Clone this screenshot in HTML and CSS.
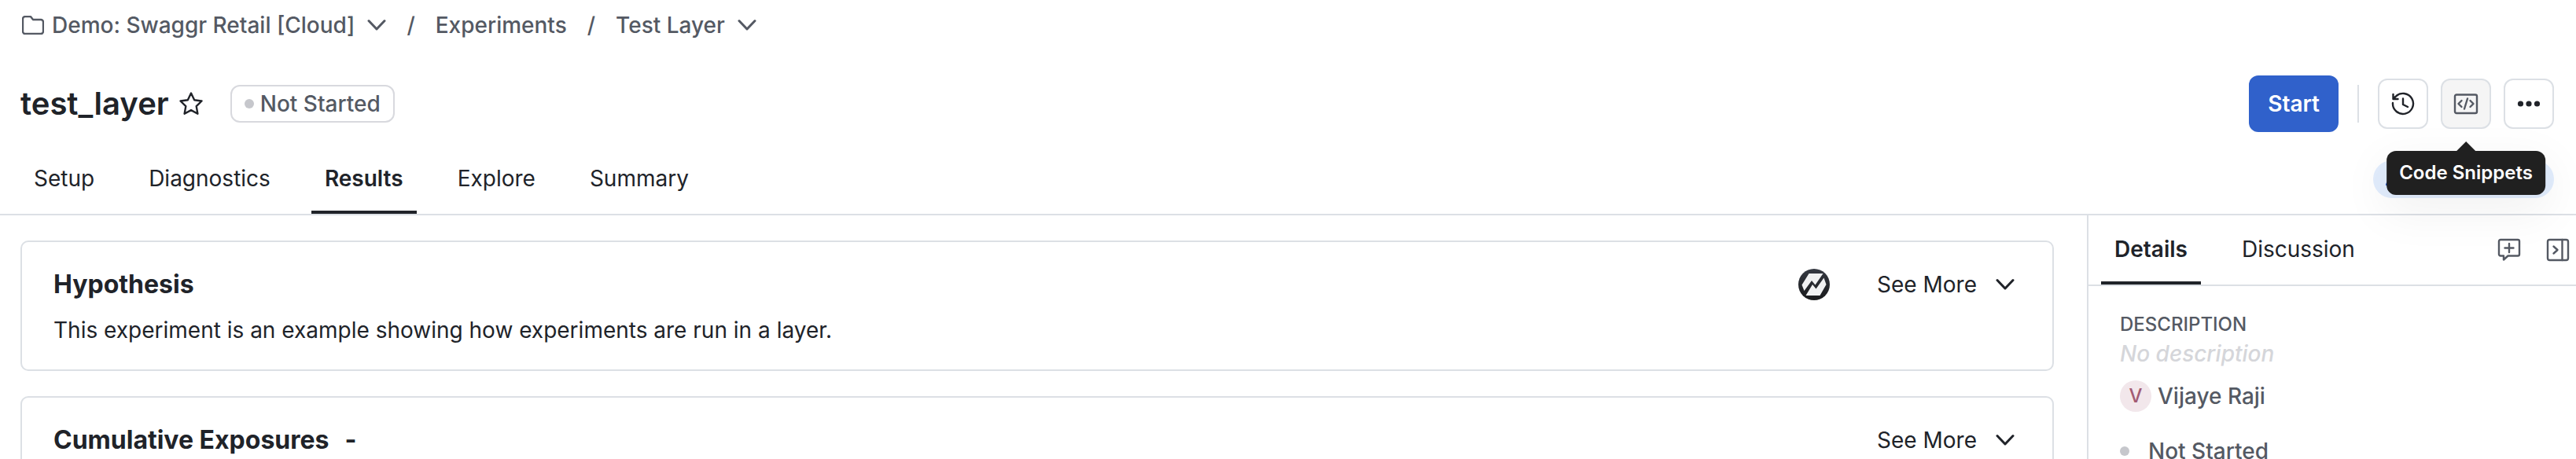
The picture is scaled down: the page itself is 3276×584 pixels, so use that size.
FILE: index.html
```html
<!DOCTYPE html>
<html lang="en">
<head>
    <meta charset="UTF-8">
    <meta name="viewport" content="width=device-width, initial-scale=1.0">
    <title>test_layer - Experiments</title>
    <link rel="stylesheet" href="styles.css">
</head>
<body>
    <header class="page-header">
        <nav class="breadcrumb" aria-label="Breadcrumb">
            <button type="button" class="crumb">
                <svg class="folder-icon" width="28" height="24" viewBox="0 0 28 24"><path d="M1 20V4a3 3 0 0 1 3-3h6a2 2 0 0 1 1.500.7L14 5h10a3 3 0 0 1 3 3v12a3 3 0 0 1-3 3H4a3 3 0 0 1-3-3z"/></svg>
                <span>Demo: Swaggr Retail [Cloud]</span>
                <svg class="chevron" width="24" height="24" viewBox="0 0 24 24"><path d="M2 6.500l10 10.500 10-10.500"/></svg>
            </button>
            <span class="slash">/</span>
            <a class="crumb" href="#experiments">Experiments</a>
            <span class="slash">/</span>
            <button type="button" class="crumb">
                <span>Test Layer</span>
                <svg class="chevron" width="24" height="24" viewBox="0 0 24 24"><path d="M2 6.500l10 10.500 10-10.500"/></svg>
            </button>
        </nav>

        <div class="title-row">
            <h1 class="page-title">test_layer</h1>
            <button type="button" class="star-btn" aria-label="Favorite">
                <svg width="32" height="32" viewBox="0 0 32 32"><path d="M16 2.500l4.200 8.700 9.300 1.300-6.800 6.600 1.700 9.600-8.400-4.600-8.400 4.600 1.700-9.600-6.800-6.600 9.300-1.300z"/></svg>
            </button>
            <span class="status-badge"><span class="dot"></span>Not Started</span>

            <div class="actions">
                <button type="button" class="start-btn">Start</button>
                <span class="divider"></span>
                <button type="button" class="icon-btn" aria-label="History">
                    <svg width="32" height="32" viewBox="0 0 32 32"><path d="M3 15a13 13 0 1 0 3.500-8L3.500 9.500M3.500 4v6h6M16 9.500V17l6 3"/></svg>
                </button>
                <div class="tooltip-wrap">
                    <button type="button" class="icon-btn active" aria-label="Code" aria-describedby="codeTip">
                        <svg width="32" height="32" viewBox="0 0 32 32"><rect x="2" y="4.500" width="28" height="23.500" rx="2"/><path d="M10.500 12L6.500 16l4 4M21.500 12l4 4-4 4M18 9.500l-4 13"/></svg>
                    </button>
                    <div class="tooltip" id="codeTip" role="tooltip">Code Snippets</div>
                </div>
                <button type="button" class="icon-btn" aria-label="More">
                    <svg class="more-icon" width="32" height="32" viewBox="0 0 32 32"><circle cx="5.500" cy="16" r="3.600"/><circle cx="16" cy="16" r="3.600"/><circle cx="26.500" cy="16" r="3.600"/></svg>
                </button>
            </div>
        </div>

        <div class="tab-row">
            <div class="tabs" role="tablist">
                <button type="button" class="tab" role="tab">Setup</button>
                <button type="button" class="tab" role="tab">Diagnostics</button>
                <button type="button" class="tab selected" role="tab" aria-selected="true">Results</button>
                <button type="button" class="tab" role="tab">Explore</button>
                <button type="button" class="tab" role="tab">Summary</button>
            </div>
            <span class="pill"><svg width="20" height="20" viewBox="0 0 20 20"><path d="M1 17L8 3l7 14z"/></svg></span>
        </div>
    </header>

    <div class="content">
        <main class="results">
            <section class="card">
                <div class="card-head">
                    <h2 class="card-title">Hypothesis</h2>
                    <svg class="brand-icon" width="40" height="40" viewBox="0 0 40 40">
                        <defs>
                            <linearGradient id="brandFill" x1="0" y1="0" x2="0" y2="1">
                                <stop offset="0" stop-color="#353942"/>
                                <stop offset="1" stop-color="#191a1c"/>
                            </linearGradient>
                        </defs>
                        <circle cx="20" cy="20" r="20" fill="url(#brandFill)"/>
                        <path fill="#f0f1f2" d="M13.500 6H31.500L21.500 20.500L17 15L7.500 28L4.500 20.500z"/>
                        <path fill="#f0f1f2" d="M9.500 34L18 20L22.500 25.500L32.500 11.500L35.500 20L27.500 34z"/>
                    </svg>
                    <button type="button" class="see-more">
                        <span>See More</span>
                        <svg class="chevron" width="24" height="24" viewBox="0 0 24 24"><path d="M2 6.500l10 10.500 10-10.500"/></svg>
                    </button>
                </div>
                <p class="card-text">This experiment is an example showing how experiments are run in a layer.</p>
            </section>

            <section class="card">
                <div class="card-head">
                    <h2 class="card-title">Cumulative Exposures</h2>
                    <span class="card-value">-</span>
                    <button type="button" class="see-more">
                        <span>See More</span>
                        <svg class="chevron" width="24" height="24" viewBox="0 0 24 24"><path d="M2 6.500l10 10.500 10-10.500"/></svg>
                    </button>
                </div>
            </section>
        </main>

        <aside class="sidebar">
            <div class="side-tabs" role="tablist">
                <button type="button" class="tab selected" role="tab" aria-selected="true">Details</button>
                <button type="button" class="tab" role="tab">Discussion</button>
                <div class="side-actions">
                    <button type="button" class="side-btn" aria-label="Add comment">
                        <svg width="32" height="32" viewBox="0 0 32 32"><path d="M5 3h22a2 2 0 0 1 2 2v16.500a2 2 0 0 1-2 2H14.500L9 28.500V23.500H5a2 2 0 0 1-2-2V5a2 2 0 0 1 2-2zM16 8v11M10.500 13.500h11"/></svg>
                    </button>
                    <button type="button" class="side-btn" aria-label="Collapse panel">
                        <svg width="32" height="32" viewBox="0 0 32 32"><rect x="3" y="3" width="26" height="26" rx="2.500"/><path d="M21.500 3v26M10.500 11.500l5 4.500-5 4.500"/></svg>
                    </button>
                </div>
            </div>
            <div class="side-body">
                <h3 class="side-label">DESCRIPTION</h3>
                <p class="placeholder">No description</p>
                <div class="owner"><span class="avatar">V</span>Vijaye Raji</div>
                <div class="side-status"><span class="dot"></span>Not Started</div>
            </div>
        </aside>
    </div>
</body>
</html>
```
FILE: styles.css
```css
:root {
    --text: #202329;
    --muted: #545963;
    --border: #dce0e5;
    --dot: #c6c7cc;
    --blue: #3061cb;
}

* {
    margin: 0;
    padding: 0;
    box-sizing: border-box;
}

body {
    display: flex;
    flex-direction: column;
    height: 100vh;
    overflow: hidden;
    font-family: Inter, sans-serif;
    font-size: 28px;
    line-height: 36px;
    color: var(--text);
    background: #fff;
}

button {
    font: inherit;
    color: inherit;
    background: none;
    border: none;
    cursor: pointer;
}

svg {
    display: block;
    flex-shrink: 0;
    fill: none;
    stroke: currentColor;
    stroke-width: 2.4;
    stroke-linecap: round;
    stroke-linejoin: round;
}

.chevron {
    stroke-width: 3;
}

/* Header */
.page-header {
    border-bottom: 2px solid var(--border);
}

.breadcrumb {
    display: flex;
    align-items: center;
    gap: 26px;
    height: 64px;
    padding: 0 28px;
    font-weight: 500;
    color: var(--muted);
}

.crumb {
    display: flex;
    align-items: center;
    gap: 16px;
    color: inherit;
    text-decoration: none;
}

.folder-icon {
    margin-right: -6px;
}

.title-row {
    display: flex;
    align-items: center;
    padding: 32px 28px 16px 26px;
}

.page-title {
    font-size: 40px;
    line-height: 48px;
    font-weight: 600;
}

.star-btn {
    margin: 0 34px 0 12px;
}

.status-badge {
    display: flex;
    align-items: center;
    gap: 8px;
    height: 48px;
    padding: 0 16px;
    border: 2px solid #d8d9de;
    border-radius: 12px;
    font-weight: 500;
    color: var(--muted);
}

.dot {
    width: 12px;
    height: 12px;
    border-radius: 50%;
    background: var(--dot);
}

.actions {
    display: flex;
    align-items: center;
    gap: 16px;
    margin-left: auto;
}

.start-btn {
    height: 72px;
    padding: 0 24px;
    border-radius: 12px;
    background: var(--blue);
    color: #fff;
    font-weight: 600;
}

.divider {
    width: 2px;
    height: 48px;
    margin: 0 8px;
    background: var(--border);
}

.icon-btn {
    display: flex;
    align-items: center;
    justify-content: center;
    width: 64px;
    height: 64px;
    border: 2px solid var(--border);
    border-radius: 12px;
    background: #fff;
}

.icon-btn.active {
    background: #f5f5f5;
    color: var(--muted);
}

.more-icon {
    fill: currentColor;
    stroke: none;
}

.tooltip-wrap {
    position: relative;
}

.tooltip {
    position: absolute;
    z-index: 2;
    top: 92px;
    left: 50%;
    transform: translateX(-50%);
    padding: 10px 16px;
    border-radius: 12px;
    background: #202020;
    color: #fff;
    font-size: 24px;
    font-weight: 600;
    white-space: nowrap;
    box-shadow: 0 18px 56px 8px rgba(0, 0, 0, 0.05);
}

.tooltip::before {
    content: "";
    position: absolute;
    top: -12px;
    left: 50%;
    margin-left: -12px;
    border: 12px solid transparent;
    border-top: none;
    border-bottom-color: #202020;
}

.tab-row {
    display: flex;
    align-items: center;
    justify-content: space-between;
    padding: 0 28px 0 26px;
}

.tabs {
    display: flex;
    gap: 35px;
}

.tab {
    padding: 25px 17px 23px;
    border-bottom: 4px solid transparent;
}

.tab.selected {
    font-weight: 600;
    border-bottom-color: var(--text);
}

.pill {
    display: flex;
    align-items: center;
    width: 230px;
    height: 48px;
    padding: 0 16px;
    border-radius: 24px;
    background: #e2edfd;
    color: var(--blue);
}

/* Content */
.content {
    display: flex;
    flex: 1;
    min-height: 0;
}

.results {
    flex: 1;
    display: flex;
    flex-direction: column;
    gap: 32px;
    padding: 32px 42px 0 26px;
}

.card {
    padding: 34px 40px 31px;
    border: 2px solid var(--border);
    border-radius: 10px;
}

.card-head {
    display: flex;
    align-items: center;
    height: 40px;
}

.card-title,
.card-value {
    font-size: 32px;
    line-height: 40px;
    font-weight: 700;
}

.card-value {
    margin-left: 20px;
}

.brand-icon {
    margin-left: auto;
    stroke: none;
}

.see-more {
    display: flex;
    align-items: center;
    gap: 24px;
    margin-left: auto;
    padding-right: 8px;
}

.brand-icon + .see-more {
    margin-left: 60px;
}

.card-text {
    margin-top: 19px;
    line-height: 38px;
}

/* Sidebar */
.sidebar {
    width: 622px;
    border-left: 2px solid var(--border);
}

.side-tabs {
    display: flex;
    gap: 35px;
    padding-left: 16px;
    border-bottom: 2px solid var(--border);
}

.side-actions {
    display: flex;
    align-items: center;
    gap: 30px;
    margin-left: auto;
    padding-right: 7px;
}

.side-btn {
    color: var(--muted);
}

.side-body {
    padding: 30px 40px;
    font-weight: 500;
    color: var(--muted);
}

.side-label {
    font-size: 24px;
    line-height: 38px;
    font-weight: 500;
}

.placeholder {
    font-style: italic;
    color: #d5d6da;
}

.owner {
    display: flex;
    align-items: center;
    gap: 8px;
    height: 40px;
    margin-top: 16px;
}

.avatar {
    width: 40px;
    height: 40px;
    border-radius: 50%;
    background: #f2e7eb;
    color: #a25b73;
    font-size: 24px;
    line-height: 40px;
    text-align: center;
}

.side-status {
    display: flex;
    align-items: center;
    gap: 24px;
    margin-top: 32px;
}
```
